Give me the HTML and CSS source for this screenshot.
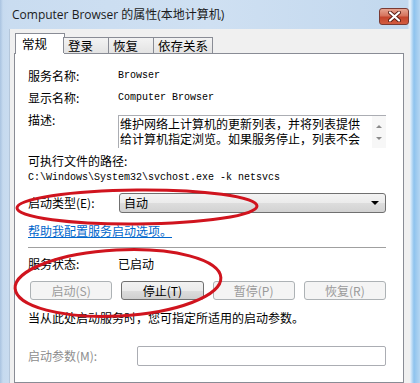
FILE: index.html
```html
<!DOCTYPE html>
<html lang="zh-CN">
<head>
    <meta charset="UTF-8" />
    <title>Computer Browser 的属性(本地计算机)</title>
    <link rel="stylesheet" href="styles.css">
</head>
<body>
    <div class="window">
        <div class="titlebar">
            <span class="title">Computer Browser 的属性(本地计算机)</span>
            <div class="close">
                <svg width="13" height="11" viewBox="0 0 13 11">
                    <path d="M2 1.5 L11 9.5 M11 1.5 L2 9.5" stroke="#5a1d14" stroke-width="4" stroke-linecap="round"/>
                    <path d="M2 1.5 L11 9.5 M11 1.5 L2 9.5" stroke="#ffffff" stroke-width="2.2" stroke-linecap="round"/>
                </svg>
            </div>
        </div>
        <div class="client">
            <div class="tabs">
                <div class="tab active">常规</div>
                <div class="tab">登录</div>
                <div class="tab">恢复</div>
                <div class="tab">依存关系</div>
            </div>
            <div class="panel">
                <div class="row first">
                    <span class="label">服务名称:</span>
                    <span class="mono">Browser</span>
                </div>
                <div class="row">
                    <span class="label">显示名称:</span>
                    <span class="mono">Computer Browser</span>
                </div>
                <div class="row desc-row">
                    <span class="label">描述:</span>
                    <div class="desc">
                        <div class="desc-text">
                            <p>维护网络上计算机的更新列表，并将列表提供</p>
                            <p>给计算机指定浏览。如果服务停止，列表不会</p>
                        </div>
                        <div class="scroll">
                            <span class="arrow up"></span>
                            <span class="arrow down"></span>
                        </div>
                    </div>
                </div>
                <div class="row path-label">可执行文件的路径:</div>
                <div class="row mono path">C:\Windows\System32\svchost.exe -k netsvcs</div>
                <div class="row combo-row">
                    <span class="label">启动类型(E):</span>
                    <div class="combo">
                        <span>自动</span>
                        <span class="combo-arrow"></span>
                    </div>
                </div>
                <a class="help" href="#">帮助我配置服务启动选项。</a>
                <div class="sep"></div>
                <div class="row status">
                    <span class="label">服务状态:</span>
                    <span>已启动</span>
                </div>
                <div class="buttons">
                    <button class="btn" disabled>启动(S)</button>
                    <button class="btn">停止(T)</button>
                    <button class="btn" disabled>暂停(P)</button>
                    <button class="btn" disabled>恢复(R)</button>
                </div>
                <div class="row note">当从此处启动服务时，您可指定所适用的启动参数。</div>
                <div class="row params">
                    <span class="label label-wide">启动参数(M):</span>
                    <div class="param-input"></div>
                </div>
            </div>
        </div>
        <svg class="marks" width="420" height="383" viewBox="0 0 420 383">
            <ellipse cx="137" cy="207" rx="120" ry="17" transform="rotate(-0.5 137 207)"/>
            <ellipse cx="118" cy="283" rx="103" ry="33" transform="rotate(-3 118 283)"/>
        </svg>
    </div>
</body>
</html>
```

FILE: styles.css
```css
body {
    margin: 0;
    width: 420px;
    height: 383px;
    overflow: hidden;
    font-family: "Noto Sans CJK SC", "Noto Sans", sans-serif;
    font-size: 12px;
    color: #000;
}
.window {
    position: relative;
    width: 420px;
    height: 383px;
    box-sizing: border-box;
    padding: 0 10px 0 9px;
    display: flex;
    flex-direction: column;
    background: linear-gradient(to right, #a9c3e0 0, #c6daef 3px, #c9dcf0 9px, #cfe0f2 50%, #c2d8ee 97%, #e8f2fb 410px, #8ec3ee 414px, #b5d6f2 420px);
}
.titlebar {
    height: 29px;
    display: flex;
    align-items: flex-start;
}
.title {
    font-family: "Open Sans", "Noto Sans CJK SC", sans-serif;
    font-size: 12px;
    line-height: 16px;
    margin: 7px 0 0 3px;
    color: #1b1b1b;
}
.close {
    margin: 8px 1px 0 auto;
    width: 30px;
    height: 17px;
    box-sizing: border-box;
    border: 1px solid #7a3a33;
    border-radius: 3px;
    background: linear-gradient(#e6a491 0, #d6735d 45%, #c4442c 55%, #d25c40 100%);
    display: flex;
    justify-content: center;
    align-items: center;
}
.client {
    flex: 1;
    background: #f0f0f0;
    border-left: 1px solid #b4c6da;
    padding: 4px 6px 0 4px;
    display: flex;
    flex-direction: column;
}
.tabs {
    height: 20px;
    display: flex;
    align-items: flex-end;
    padding-left: 3px;
    position: relative;
    z-index: 1;
}
.tab {
    min-width: 46px;
    height: 16px;
    box-sizing: border-box;
    padding: 0 4px;
    border: 1px solid #898c95;
    border-bottom: none;
    margin-left: -1px;
    background: linear-gradient(#f3f3f3, #e3e3e3);
    font-size: 12.5px;
    line-height: 16px;
}
.tab.active {
    min-width: 50px;
    height: 21px;
    margin: 0 -1px -1px -2px;
    padding: 0 6px;
    background: #fff;
    line-height: 19px;
}
.panel {
    flex: 1;
    background: #fff;
    border: 1px solid #898c95;
    padding: 0 17px 0 13px;
}
.row {
    display: flex;
    align-items: center;
    height: 16px;
    line-height: 16px;
    margin-top: 6px;
    white-space: nowrap;
}
.row.first {
    margin-top: 14px;
}
.label {
    width: 90px;
    flex-shrink: 0;
}
.label-wide {
    width: 109px;
}
.mono {
    font-family: "Liberation Mono", monospace;
    font-size: 10px;
}
.desc-row {
    height: 32px;
    align-items: flex-start;
}
.desc {
    flex: 1;
    height: 33px;
    margin-top: 3px;
    box-sizing: border-box;
    border-top: 1px solid #abadb3;
    border-left: 1px solid #abadb3;
    display: flex;
    overflow: hidden;
}
.desc-text {
    flex: 1;
    overflow: hidden;
    padding-left: 1px;
}
.desc-text p {
    margin: 0;
    line-height: 15px;
}
.scroll {
    width: 14px;
    background: #f7f7f7;
    display: flex;
    flex-direction: column;
    align-items: center;
    justify-content: space-around;
    padding: 4px 0;
}
.arrow {
    width: 0;
    height: 0;
    border-left: 3px solid transparent;
    border-right: 3px solid transparent;
}
.arrow.up {
    border-bottom: 3px solid #8b8b8b;
}
.arrow.down {
    border-top: 3px solid #8b8b8b;
}
.path-label {
    margin-top: 9px;
}
.path {
    margin-top: 1px;
}
.combo-row {
    height: 20px;
    margin-top: 7px;
}
.label + .combo {
    margin-left: 1px;
}
.combo {
    flex: 1;
    height: 20px;
    box-sizing: border-box;
    border: 1px solid #707070;
    border-radius: 3px;
    background: linear-gradient(#f3f3f3 0, #ebebeb 50%, #dddddd 51%, #d2d2d2 100%);
    display: flex;
    align-items: center;
    justify-content: space-between;
    padding: 0 6px 0 4px;
}
.combo-arrow {
    width: 0;
    height: 0;
    border-left: 4px solid transparent;
    border-right: 4px solid transparent;
    border-top: 4px solid #000;
}
.help {
    display: block;
    margin-top: 10px;
    line-height: 16px;
    color: #0066cc;
    text-decoration: underline;
}
.sep {
    margin-top: 8px;
    height: 1px;
    background: #a0a0a0;
    border-bottom: 1px solid #fff;
}
.status {
    margin-top: 7px;
}
.buttons {
    display: flex;
    gap: 9px;
    margin: 9px 0 0 2px;
}
.btn {
    flex: 1;
    height: 19px;
    padding: 0;
    font-family: inherit;
    font-size: 12px;
    line-height: 16px;
    color: #000;
    border: 1px solid #707070;
    border-radius: 3px;
    background: linear-gradient(#f2f2f2 0, #ebebeb 50%, #dddddd 51%, #cfcfcf 100%);
}
.btn:disabled {
    color: #9a9a9a;
    border-color: #adb2b5;
    background: #f4f4f4;
}
.note {
    margin-top: 10px;
}
.params {
    height: 20px;
    margin-top: 20px;
    color: #8d8d8d;
}
.param-input {
    flex: 1;
    height: 20px;
    box-sizing: border-box;
    border: 1px solid #abadb3;
    border-radius: 2px;
    background: #fff;
}
.marks {
    position: absolute;
    top: 0;
    left: 0;
    pointer-events: none;
}
.marks ellipse {
    fill: none;
    stroke: #d0141e;
    stroke-width: 3;
}
```
